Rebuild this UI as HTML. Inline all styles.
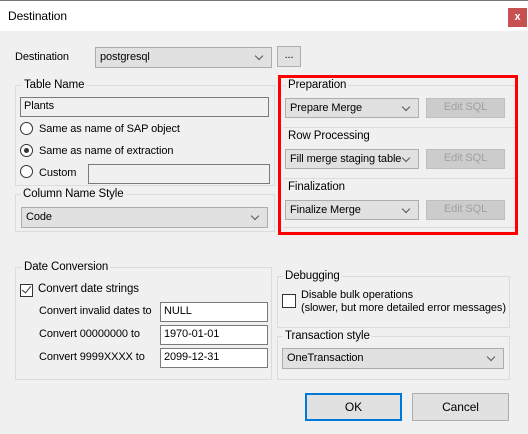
<!DOCTYPE html><html><head><style>
*{box-sizing:border-box;margin:0;padding:0}
body{width:528px;height:434px;background:#f0f0f0;font:11px "Liberation Sans",sans-serif;letter-spacing:-0.1px;color:#000;position:relative;overflow:hidden}
.a{position:absolute}
.t{position:absolute;white-space:nowrap;line-height:14px}
.cb{position:absolute;background:#e1e1e1;border:1px solid #adadad;padding-left:4px;line-height:18px;white-space:nowrap}
.cb:after{content:"";position:absolute;right:9px;top:5px;width:5px;height:5px;border-right:1px solid #555;border-bottom:1px solid #555;transform:rotate(45deg)}
.tb{position:absolute;background:#fff;border:1px solid #7a7a7a;padding-left:3px;line-height:17px}
.g{position:absolute;border:1px solid #dcdcdc}
.gl{position:absolute;background:#f0f0f0;padding:0 2px;line-height:14px;white-space:nowrap;font-size:11.5px}
.btn{position:absolute;background:#cccccc;border:1px solid #bfbfbf;color:#a0a0a0;text-align:center;line-height:17px}
.rd{position:absolute;width:13px;height:13px;border:1px solid #333;border-radius:50%;background:#fff}
</style></head><body>
<div class="a" style="left:0;top:0;width:528px;height:31px;background:#fff;border-top:1px solid #777"></div>
<div class="t" style="left:8px;top:9px;font-size:12px">Destination</div>
<div class="a" style="left:508px;top:8px;width:19px;height:19px;background:#c75050;color:#fff;text-align:center;font-size:11px;font-weight:bold;line-height:18px">x</div>

<div class="t" style="left:15px;top:50px">Destination</div>
<div class="cb" style="left:95px;top:47px;width:177px;height:21px;">postgresql</div>
<div class="a" style="left:277px;top:46px;width:24px;height:21px;background:#e1e1e1;border:1px solid #adadad;text-align:center;line-height:16px">...</div>

<div class="g" style="left:15px;top:85px;width:260px;height:101px"></div>
<div class="gl" style="left:22px;top:78px">Table Name</div>
<div class="tb" style="left:20px;top:97px;width:249px;height:20px;background:#f0f0f0">Plants</div>
<div class="rd" style="left:20px;top:122px"></div>
<div class="t" style="left:39px;top:122px">Same as name of SAP object</div>
<div class="rd" style="left:20px;top:144px"></div>
<div class="a" style="left:24px;top:148px;width:5px;height:5px;border-radius:50%;background:#333"></div>
<div class="t" style="left:39px;top:144px">Same as name of extraction</div>
<div class="rd" style="left:20px;top:165px"></div>
<div class="t" style="left:39px;top:166px">Custom</div>
<div class="tb" style="left:88px;top:164px;width:182px;height:20px;background:#f0f0f0"></div>

<div class="g" style="left:15px;top:194px;width:260px;height:38px"></div>
<div class="gl" style="left:21px;top:187px">Column Name Style</div>
<div class="cb" style="left:21px;top:207px;width:247px;height:21px">Code</div>

<div class="g" style="left:283px;top:85px;width:232px;height:143px;border-left:none;border-right:none"></div>
<div class="a" style="left:283px;top:127px;width:232px;height:1px;background:#dcdcdc"></div>
<div class="a" style="left:283px;top:178px;width:232px;height:1px;background:#dcdcdc"></div>
<div class="gl" style="left:286px;top:78px">Preparation</div>
<div class="cb" style="left:285px;top:98px;width:134px;height:20px">Prepare Merge</div>
<div class="btn" style="left:426px;top:98px;width:79px;height:20px">Edit SQL</div>
<div class="gl" style="left:286px;top:129px">Row Processing</div>
<div class="cb" style="left:285px;top:149px;width:134px;height:20px">Fill merge staging table</div>
<div class="btn" style="left:426px;top:149px;width:79px;height:20px">Edit SQL</div>
<div class="gl" style="left:286px;top:180px">Finalization</div>
<div class="cb" style="left:285px;top:200px;width:134px;height:20px">Finalize Merge</div>
<div class="btn" style="left:426px;top:200px;width:79px;height:20px">Edit SQL</div>
<div class="a" style="left:278px;top:75px;width:240px;height:160px;border:3px solid #f00"></div>

<div class="g" style="left:15px;top:267px;width:257px;height:113px"></div>
<div class="gl" style="left:22px;top:260px">Date Conversion</div>
<div class="a" style="left:20px;top:284px;width:13px;height:13px;border:1px solid #333;background:#fff"></div>
<div class="a" style="left:24px;top:284px;width:5px;height:9px;border-right:1px solid #333;border-bottom:1px solid #333;transform:rotate(40deg)"></div>
<div class="t" style="left:38px;top:282px;font-size:11.5px">Convert date strings</div>
<div class="t" style="left:39px;top:304px">Convert invalid dates to</div>
<div class="t" style="left:39px;top:327px">Convert 00000000 to</div>
<div class="t" style="left:39px;top:350px">Convert 9999XXXX to</div>
<div class="tb" style="left:160px;top:302px;width:108px;height:20px">NULL</div>
<div class="tb" style="left:160px;top:325px;width:108px;height:20px">1970-01-01</div>
<div class="tb" style="left:160px;top:348px;width:108px;height:20px">2099-12-31</div>

<div class="g" style="left:277px;top:276px;width:233px;height:52px"></div>
<div class="gl" style="left:283px;top:269px">Debugging</div>
<div class="a" style="left:282px;top:294px;width:14px;height:14px;border:1px solid #333;background:#fff"></div>
<div class="t" style="left:301px;top:288px">Disable bulk operations</div>
<div class="t" style="left:301px;top:301px">(slower, but more detailed error messages)</div>

<div class="g" style="left:277px;top:336px;width:233px;height:44px"></div>
<div class="gl" style="left:283px;top:329px">Transaction style</div>
<div class="cb" style="left:282px;top:348px;width:222px;height:21px">OneTransaction</div>

<div class="a" style="left:305px;top:393px;width:97px;height:28px;background:#e1e1e1;border:2px solid #0078d7;text-align:center;line-height:24px;font-size:12px">OK</div>
<div class="a" style="left:412px;top:393px;width:97px;height:28px;background:#e1e1e1;border:1px solid #adadad;text-align:center;line-height:26px;font-size:12px">Cancel</div>
</body></html>
